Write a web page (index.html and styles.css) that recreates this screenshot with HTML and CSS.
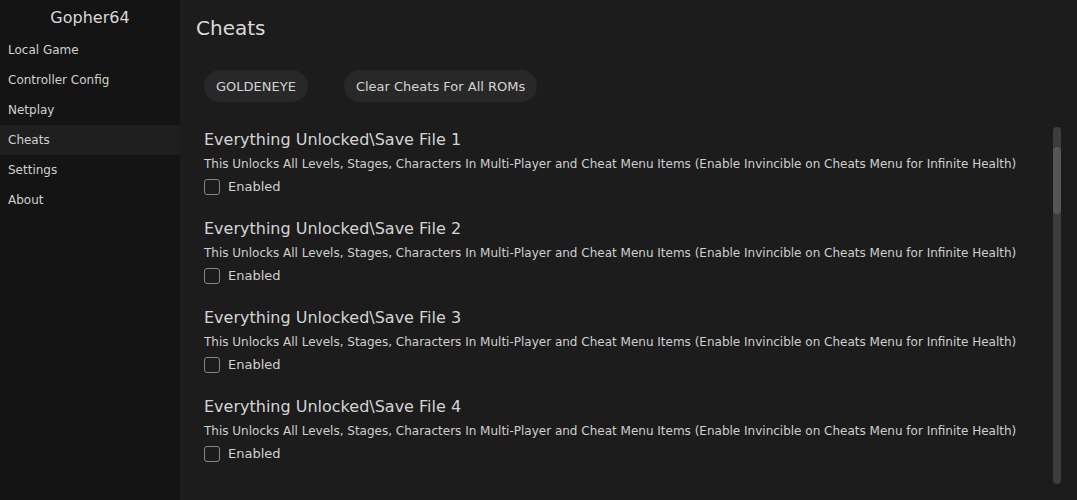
FILE: index.html
```html
<!DOCTYPE html>
<html>
<head>
<meta charset="utf-8">
<link rel="stylesheet" href="styles.css">
</head>
<body>
<div class="app">
  <nav class="sidebar">
    <div class="brand">Gopher64</div>
    <div class="nav-item">Local Game</div>
    <div class="nav-item">Controller Config</div>
    <div class="nav-item">Netplay</div>
    <div class="nav-item active">Cheats</div>
    <div class="nav-item">Settings</div>
    <div class="nav-item">About</div>
  </nav>
  <main class="main">
    <h1 class="title">Cheats</h1>
    <div class="buttons">
      <button class="btn">GOLDENEYE</button>
      <button class="btn">Clear Cheats For All ROMs</button>
    </div>
    <div class="list-wrap">
      <div class="list">
        <div class="cheat">
          <div class="cheat-name">Everything Unlocked\Save File 1</div>
          <div class="cheat-desc">This Unlocks All Levels, Stages, Characters In Multi-Player and Cheat Menu Items (Enable Invincible on Cheats Menu for Infinite Health)</div>
          <label class="check"><span class="box"></span>Enabled</label>
        </div>
        <div class="cheat">
          <div class="cheat-name">Everything Unlocked\Save File 2</div>
          <div class="cheat-desc">This Unlocks All Levels, Stages, Characters In Multi-Player and Cheat Menu Items (Enable Invincible on Cheats Menu for Infinite Health)</div>
          <label class="check"><span class="box"></span>Enabled</label>
        </div>
        <div class="cheat">
          <div class="cheat-name">Everything Unlocked\Save File 3</div>
          <div class="cheat-desc">This Unlocks All Levels, Stages, Characters In Multi-Player and Cheat Menu Items (Enable Invincible on Cheats Menu for Infinite Health)</div>
          <label class="check"><span class="box"></span>Enabled</label>
        </div>
        <div class="cheat">
          <div class="cheat-name">Everything Unlocked\Save File 4</div>
          <div class="cheat-desc">This Unlocks All Levels, Stages, Characters In Multi-Player and Cheat Menu Items (Enable Invincible on Cheats Menu for Infinite Health)</div>
          <label class="check"><span class="box"></span>Enabled</label>
        </div>
      </div>
      <div class="scrollbar"><div class="thumb"></div></div>
    </div>
  </main>
</div>
</body>
</html>
```
FILE: styles.css
```css
* { box-sizing: border-box; }
html, body { margin: 0; padding: 0; }
body {
  width: 1077px;
  height: 500px;
  overflow: hidden;
  background: #1c1c1c;
  font-family: "DejaVu Sans", sans-serif;
  color: #d6d6d6;
}
.app { display: flex; height: 500px; }
.sidebar {
  width: 180px;
  flex: none;
  background: #141414;
  display: flex;
  flex-direction: column;
}
.brand {
  height: 35px;
  text-align: center;
  font-size: 16px;
  line-height: 35px;
  color: #d8d8d8;
}
.nav-item {
  height: 30px;
  line-height: 30px;
  padding-left: 8px;
  font-size: 12px;
  color: #d0d0d0;
}
.nav-item.active { background: #1f1f1f; }
.main {
  flex: 1;
  display: flex;
  flex-direction: column;
  padding: 0 0 0 16px;
}
.title {
  margin: 0;
  height: 56px;
  line-height: 56px;
  font-size: 20px;
  font-weight: normal;
  color: #dadada;
}
.buttons {
  display: flex;
  gap: 36px;
  padding: 14px 0 0 8px;
  height: 70px;
}
.btn {
  height: 32px;
  padding: 0 12px;
  border: none;
  border-radius: 16px;
  background: #282828;
  color: #d4d4d4;
  font-family: "DejaVu Sans", sans-serif;
  font-size: 13px;
}
.list-wrap {
  display: flex;
  height: 357px;
  margin-top: 1px;
}
.list {
  flex: 1;
  padding-left: 8px;
  padding-top: 1px;
}
.cheat { height: 89px; }
.cheat-name {
  font-size: 16px;
  line-height: 24px;
  color: #d4d4d4;
}
.cheat-desc {
  font-size: 12px;
  line-height: 24px;
  color: #cfcfcf;
  white-space: nowrap;
}
.check {
  display: flex;
  align-items: center;
  gap: 8px;
  font-size: 13px;
  line-height: 22px;
  color: #d0d0d0;
}
.box {
  width: 16px;
  height: 16px;
  border: 1.5px solid #858585;
  border-radius: 3px;
}
.scrollbar {
  width: 8px;
  flex: none;
  margin-right: 16px;
  border-radius: 4px;
  background: #3d3d3d;
  padding-top: 20px;
}
.thumb {
  height: 67px;
  border-radius: 4px;
  background: #565656;
}
```
